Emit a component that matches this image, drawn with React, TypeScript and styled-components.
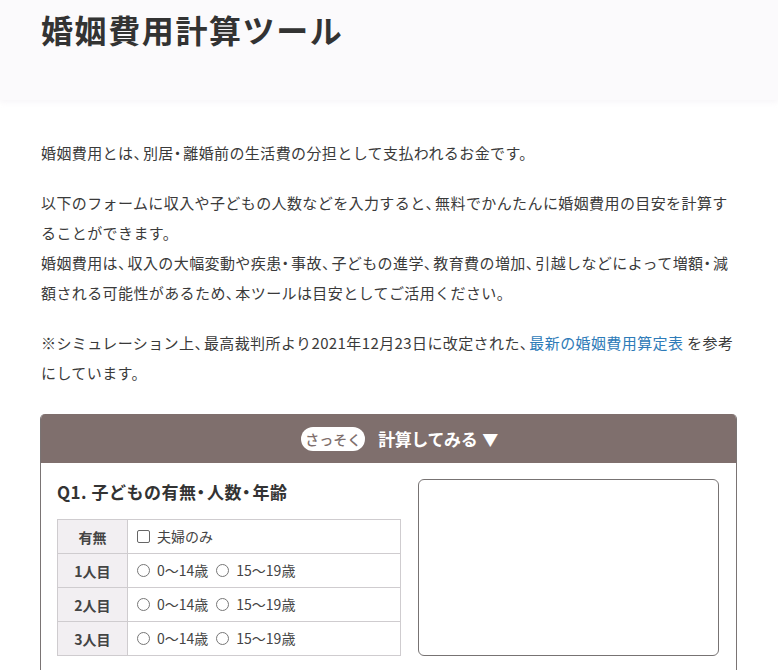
import React from "react";
import styled, { createGlobalStyle } from "styled-components";

const GlobalStyle = createGlobalStyle`
  html, body {
    margin: 0;
    padding: 0;
    background: #ffffff;
  }
  body {
    font-family: "Noto Sans CJK JP", "Noto Sans", sans-serif;
    color: #333333;
  }
  * { box-sizing: border-box; }
`;

/* Commas and middle dots are set narrower than a full em, as proportional Japanese fonts draw them */
const Narrow = styled.span`
  font-feature-settings: "halt";
  letter-spacing: 2px;
`;

function Jp({ children }: { children: string }) {
  const parts = children.split(/([、・])/);
  return (
    <>
      {parts.map((p, i) =>
        p === "、" || p === "・" ? <Narrow key={i}>{p}</Narrow> : <React.Fragment key={i}>{p}</React.Fragment>
      )}
    </>
  );
}

const Header = styled.header`
  height: 100px;
  background: #fbfafc;
  box-shadow: 0 2px 6px rgba(240, 236, 242, 0.6);
  padding: 7px 0 0 41px;
`;

const Title = styled.h1`
  margin: 0;
  font-size: 32px;
  line-height: 44px;
  font-weight: 700;
  letter-spacing: 1.6px;
  color: #333333;
`;

const Main = styled.main`
  width: 696px;
  margin: 0 0 0 41px;
  padding-top: 38px;
`;

const Paragraph = styled.p`
  margin: 0 0 20px;
  font-size: 15px;
  line-height: 30px;
  color: #3a3a3a;
  letter-spacing: 0.4px;
`;

const Link = styled.a`
  color: #2e7bb8;
  text-decoration: none;
`;

const Card = styled.section`
  margin: 26px 0 0 -1px;
  width: 697px;
  border: 1px solid #7a7474;
  border-top: none;
  border-radius: 5px 5px 0 0;
  overflow: hidden;
  height: 260px;
`;

const CardHead = styled.div`
  height: 49px;
  background: #7f6f6d;
  display: flex;
  align-items: center;
  justify-content: center;
  gap: 13px;
  margin: 0 -1px;
  padding-left: 22px;
`;

const Pill = styled.span`
  background: #ffffff;
  color: #7f6f6d;
  border-radius: 12px;
  height: 24px;
  padding: 0 4px;
  font-size: 14px;
  font-weight: 500;
  display: inline-flex;
  align-items: center;
`;

const HeadText = styled.span`
  color: #ffffff;
  font-size: 17px;
  font-weight: 700;
  letter-spacing: -0.4px;
  display: inline-flex;
  align-items: center;
  gap: 5px;
`;

const Arrow = styled.span`
  font-size: 16px;
`;

const Body = styled.div`
  display: flex;
  gap: 17px;
  padding: 16px 17px 0 16px;
`;

const Question = styled.div`
  width: 344px;
`;

const QTitle = styled.h2`
  margin: 0 0 15px;
  font-size: 17px;
  line-height: 24px;
  font-weight: 700;
  letter-spacing: 0.5px;
  color: #333333;
  padding-top: 1px;
`;

const Table = styled.table`
  border-collapse: collapse;
  width: 344px;
`;

const Th = styled.th`
  width: 70px;
  height: 34px;
  background: #f2eff2;
  border: 1px solid #cfcccf;
  font-size: 14px;
  font-weight: 700;
  color: #444444;
  text-align: center;
  padding: 0;
`;

const Td = styled.td`
  border: 1px solid #cfcccf;
  height: 34px;
  padding: 0 0 0 9px;
  font-size: 14px;
  color: #444444;
`;

const Option = styled.label`
  display: inline-flex;
  align-items: center;
  gap: 7px;
  margin-right: 8px;
`;

const Box = styled.span`
  width: 13px;
  height: 13px;
  border: 1px solid #666;
  border-radius: 2px;
  display: inline-block;
`;

const Radio = styled.span`
  width: 13px;
  height: 13px;
  border: 1px solid #777;
  border-radius: 50%;
  display: inline-block;
`;

const ResultBox = styled.div`
  width: 301px;
  height: 177px;
  border: 1px solid #777373;
  border-radius: 6px;
`;

const ages = ["1人目", "2人目", "3人目"];

export default function App() {
  return (
    <>
      <GlobalStyle />
      <Header>
        <Title>婚姻費用計算ツール</Title>
      </Header>
      <Main>
        <Paragraph>
          <Jp>婚姻費用とは、別居・離婚前の生活費の分担として支払われるお金です。</Jp>
        </Paragraph>
        <Paragraph>
          <Jp>以下のフォームに収入や子どもの人数などを入力すると、無料でかんたんに婚姻費用の目安を計算することができます。</Jp>
          <br />
          <Jp>婚姻費用は、収入の大幅変動や疾患・事故、子どもの進学、教育費の増加、引越しなどによって増額・減額される可能性があるため、本ツールは目安としてご活用ください。</Jp>
        </Paragraph>
        <Paragraph>
          <Jp>※シミュレーション上、最高裁判所より2021年12月23日に改定された、</Jp>
          <Link href="#">最新の婚姻費用算定表</Link> を参考にしています。
        </Paragraph>
        <Card>
          <CardHead>
            <Pill>さっそく</Pill>
            <HeadText>
              計算してみる<Arrow>▼</Arrow>
            </HeadText>
          </CardHead>
          <Body>
            <Question>
              <QTitle>
                <Jp>Q1. 子どもの有無・人数・年齢</Jp>
              </QTitle>
              <Table>
                <tbody>
                  <tr>
                    <Th>有無</Th>
                    <Td>
                      <Option>
                        <Box />
                        夫婦のみ
                      </Option>
                    </Td>
                  </tr>
                  {ages.map((a) => (
                    <tr key={a}>
                      <Th>{a}</Th>
                      <Td>
                        <Option>
                          <Radio />
                          0〜14歳
                        </Option>
                        <Option>
                          <Radio />
                          15〜19歳
                        </Option>
                      </Td>
                    </tr>
                  ))}
                </tbody>
              </Table>
            </Question>
            <ResultBox />
          </Body>
        </Card>
      </Main>
    </>
  );
}
